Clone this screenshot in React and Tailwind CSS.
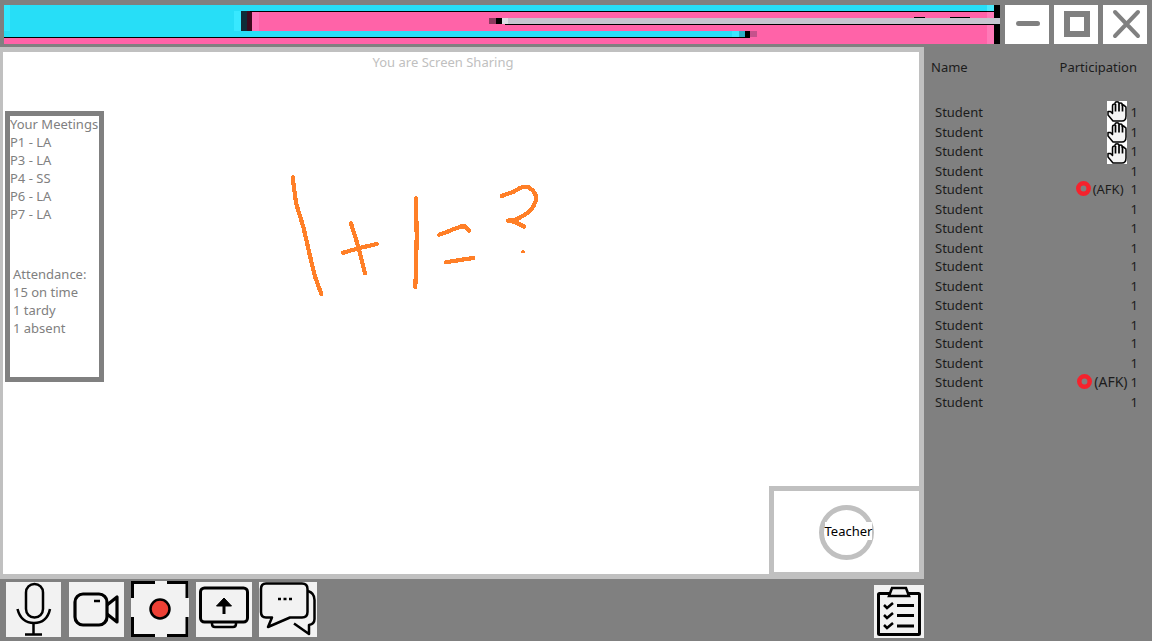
const rowHeights = ['h-[20px]', 'h-[19px]', 'h-[20px]', 'h-[18px]'];

const students = [
  { hand: '-mt-[2px]' },
  { hand: '-mt-[1px]' },
  { hand: 'mt-[1px]' },
  {},
  { afk: 'first' },
  {},
  {},
  {},
  {},
  {},
  {},
  {},
  {},
  {},
  { afk: 'second' },
  {},
];

const meetings = ['P1 - LA', 'P3 - LA', 'P4 - SS', 'P6 - LA', 'P7 - LA'];
const attendance = ['Attendance:', '15 on time', '1 tardy', '1 absent'];

// the broken title bar texture, page coordinates
function GlitchBar() {
  return (
    <svg width="996" height="39" viewBox="4 5 996 39" shapeRendering="crispEdges" className="block shrink-0">
      <rect x="4" y="5" width="996" height="39" fill="#ff63a8" />
      <rect x="4" y="5" width="990" height="6" fill="#27def7" />
      <rect x="987" y="5" width="7" height="6" fill="#4be9fb" />
      <rect x="4" y="11" width="250" height="20" fill="#27def7" />
      <rect x="4" y="5" width="6" height="32" fill="#33e8ff" />
      <rect x="234" y="11" width="7" height="20" fill="#38e8ff" />
      <rect x="241" y="11" width="6" height="20" fill="#0f2c38" />
      <rect x="247" y="11" width="5" height="20" fill="#3b0a1e" />
      <rect x="252" y="11" width="7" height="20" fill="#ff74b8" />
      <rect x="987" y="12" width="7" height="32" fill="#ff7ab8" />
      <rect x="250" y="11" width="744" height="1" fill="#000000" />
      <rect x="489" y="18" width="7" height="6" fill="#8c3a5f" />
      <rect x="496" y="18" width="6" height="6" fill="#000000" />
      <rect x="502" y="18" width="6" height="6" fill="#dfdfe8" />
      <rect x="508" y="18" width="492" height="6" fill="#c6c6d0" />
      <rect x="505" y="24" width="489" height="1" fill="#000000" />
      <rect x="914" y="17" width="11" height="1" fill="#000000" />
      <rect x="950" y="17" width="20" height="1" fill="#000000" />
      <rect x="4" y="31" width="728" height="6" fill="#27def7" />
      <rect x="732" y="31" width="7" height="6" fill="#3be6ff" />
      <rect x="739" y="31" width="6" height="6" fill="#2cb0c8" />
      <rect x="745" y="31" width="5" height="7" fill="#000000" />
      <rect x="750" y="31" width="7" height="6" fill="#c5528c" />
      <rect x="4" y="37" width="741" height="1" fill="#000000" />
      <rect x="994" y="5" width="6" height="13" fill="#000000" />
      <rect x="994" y="24" width="6" height="20" fill="#000000" />
    </svg>
  );
}

function WindowButton({ children }) {
  return (
    <div className="w-[44px] h-[39px] bg-white flex items-center justify-center">
      <svg width="44" height="39" viewBox="0 0 44 39" fill="none" stroke="#808080" strokeWidth="5">
        {children}
      </svg>
    </div>
  );
}

function Whiteboard() {
  const strokes = [
    '292.7,177.3 296,203 303.3,226.7 309.3,253 315,276.7 321.3,294',
    '351,223.3 358.3,246.7 365,273.3',
    '343.3,252.7 358.3,248.3 376.7,244',
    '416,198.3 416.7,236.7 416,270 415.3,287.3',
    '439.3,234.7 447,232 454,229 461,226.5 465,226.5 469.3,230.7',
    '445.7,262.3 460,260 473.3,258',
    '501.7,196 507,194 513,192 519,188.500 524,186.7 529,187.500 533,190.500 535.500,195 536,200 534,205 531,210 526,214 520,217.500 515,220 508,220.500 515,222 524.3,226.7',
  ];
  return (
    <svg className="absolute left-0 top-0" width="916" height="522" viewBox="3 52 916 522" fill="none" stroke="#ff7f27" strokeWidth="4.200" strokeLinecap="round" strokeLinejoin="round" shapeRendering="crispEdges">
      {strokes.map((s) => (
        <polyline key={s} points={s} />
      ))}
      <circle cx="523" cy="251.7" r="1.800" fill="#ff7f27" stroke="none" />
    </svg>
  );
}

function Hand({ className }) {
  return (
    <svg width="20" height="21" viewBox="0 0 20 21" className={`block shrink-0 bg-white ${className}`} fill="#f4f4f4" stroke="#000000" strokeWidth="1.500" strokeLinejoin="round">
      <path d="M6 20 L1 14 L1 10.500 L3.500 10.500 L5.500 12.500 V5 Q5.500 3 7.500 3 L8 3 V2 Q8 .8 10 .8 Q12 .8 12 2 V2.500 Q14 1.500 15 2.500 V4 Q17 3.500 17.500 5 Q19 5 19 7 V15 Q19 20 15 20 Z" />
      <path d="M8.500 3 V10.500 M12 2.500 V10.500 M15.500 4 V10.500" fill="none" strokeWidth="1.700" />
    </svg>
  );
}

function AfkRing() {
  return (
    <svg width="15" height="15" viewBox="0 0 15 15" fill="none" className="block shrink-0 mt-[1px]">
      <circle cx="7.500" cy="7.500" r="5.200" stroke="#f5222d" strokeWidth="4.600" />
    </svg>
  );
}

function StudentRow({ student, index }) {
  return (
    <div className={`${rowHeights[index % 4]} flex items-start leading-[18px] pl-[11px] pr-[14px] text-[13px] text-[#1c1c1c]`}>
      <span className="flex-1">Student</span>
      {student.hand && <Hand className={student.hand} />}
      {student.afk === 'first' && (
        <>
          <AfkRing />
          <span className="ml-[2px] mr-[7px]">(AFK)</span>
        </>
      )}
      {student.afk === 'second' && (
        <>
          <AfkRing />
          <span className="ml-[2px] mr-[3px] text-[14px]">(AFK)</span>
        </>
      )}
      <span className={student.hand ? 'ml-[4px]' : ''}>1</span>
    </div>
  );
}

function Tile({ className, viewBox, children }) {
  return (
    <svg className={`block shrink-0 bg-[#f2f2f2] ${className}`} viewBox={viewBox} fill="none" stroke="#000000" strokeWidth="3">
      {children}
    </svg>
  );
}

export default function App() {
  return (
    <div className="w-[1152px] h-[641px] bg-[#808080] overflow-hidden font-['Noto_Sans',sans-serif]">
      <div className="h-[47px] pt-[5px] pl-[4px] flex">
        <GlitchBar />
        <div className="ml-[5px] flex gap-[5px]">
          <WindowButton>
            <path d="M13.500 18.500 H32.500" strokeLinecap="round" strokeWidth="5" />
          </WindowButton>
          <WindowButton>
            <rect x="13" y="9" width="20" height="20" strokeWidth="6" />
          </WindowButton>
          <WindowButton>
            <path d="M12 7 L35 31 M35 7 L12 31" strokeLinecap="round" strokeWidth="4" />
          </WindowButton>
        </div>
      </div>

      <div className="flex h-[532px]">
        <div className="w-[924px] h-[532px] shrink-0 border-l-[3px] border-r-[5px] border-t-[5px] border-b-[5px] border-[#c0c0c0] bg-white relative">
          <p className="text-center text-[13px] leading-[18px] pr-[36px] text-[#c0c0c0] h-[59px] pt-[1px]">You are Screen Sharing</p>
          <div className="ml-[2px] w-[99px] h-[271px] border-[5px] border-[#808080] text-[13px] leading-[18px] text-[#808080]">
            <div className="-mt-[1px]">Your Meetings</div>
            {meetings.map((m) => (
              <div key={m}>{m}</div>
            ))}
            <div className="mt-[42px] pl-[3px]">
              {attendance.map((a) => (
                <div key={a}>{a}</div>
              ))}
            </div>
          </div>
          <Whiteboard />
          <div className="absolute right-0 bottom-0 w-[150px] h-[88px] bg-[#c0c0c0] pl-[5px] pt-[5px] pb-[2px]">
            <div className="w-[145px] h-[81px] bg-white flex items-center justify-center">
              <div className="mt-[1px] w-[55px] h-[55px] rounded-full border-[5px] border-[#c0c0c0] flex items-center justify-center">
                <span className="ml-[4px] -mt-[2px] bg-white text-black text-[13px] leading-[18px] shrink-0">Teacher</span>
              </div>
            </div>
          </div>
        </div>

        <div className="flex-1 text-[13px] text-[#1c1c1c]">
          <div className="flex justify-between pl-[7px] pr-[15px] pt-[11px] h-[56px] leading-[18px]">
            <span>Name</span>
            <span>Participation</span>
          </div>
          {students.map((s, i) => (
            <StudentRow key={i} student={s} index={i} />
          ))}
        </div>
      </div>

      <div className="flex pt-[2px] pl-[6px]">
        <Tile className="w-[55px] h-[55px] mt-[1px]" viewBox="6 582 55 55">
          <rect x="26" y="584" width="17" height="33.500" rx="8.500" strokeWidth="2.500" />
          <path d="M17.500 609 Q21 623 34 623 Q47 623 50 609" strokeWidth="2.500" />
          <path d="M33.500 623 V634 M25 634.500 H42" strokeWidth="2.500" />
        </Tile>
        <Tile className="w-[55px] h-[55px] mt-[1px] ml-[8px]" viewBox="69 582 55 55">
          <rect x="75" y="594" width="32" height="31" rx="8" strokeWidth="3.200" />
          <path d="M94 601 H100" strokeWidth="2.500" />
          <path d="M107 605 L117 597 V622 L107 614" strokeLinejoin="round" strokeWidth="3.200" />
        </Tile>
        <Tile className="w-[58px] h-[56px] ml-[7px]" viewBox="131 581 58 56">
          <path d="M132.500 598 V582.500 H155 M167 582.500 H187 V598 M132.500 617 V635.500 H155 M167 635.500 H187 V617" />
          <circle cx="160" cy="609" r="9.500" fill="#ee4035" strokeWidth="2.500" />
        </Tile>
        <Tile className="w-[56px] h-[55px] mt-[1px] ml-[7px]" viewBox="196 582 56 55">
          <rect x="200.500" y="588" width="47" height="34" rx="4" />
          <path d="M212 622 V624 Q212 627 215 627 H233 Q236 627 236 624 V622" strokeWidth="2.500" />
          <path d="M224 614 V600" />
          <path d="M216.500 606 L224 598 L231.500 606 Z" fill="#000000" strokeWidth="1" />
        </Tile>
        <Tile className="w-[58px] h-[55px] mt-[1px] ml-[7px]" viewBox="259 582 58 55">
          <path d="M266 583.500 H302 Q307.500 583.500 307.500 589 V612 Q307.500 617.500 302 617.500 H290 L268 627 L272 617.500 H266 Q261 617.500 261 612 V589 Q261 583.500 266 583.500 Z" strokeWidth="2.500" strokeLinejoin="round" />
          <path d="M308 591 Q314.500 593 314.500 600 V619 Q314.500 624 309 625 V634 L294 623.500" strokeWidth="2.500" strokeLinejoin="round" />
          <path d="M278 599 H292" strokeDasharray="3 2.500" strokeWidth="2.500" />
        </Tile>
        <div className="flex-1" />
        <Tile className="w-[50px] h-[53px] mr-[228px] mt-[4px]" viewBox="874 585 50 53">
          <rect x="878.500" y="593.500" width="41" height="41" rx="1" />
          <path d="M889 596 L892 588 H906 L909 596 Z" fill="#f2f2f2" strokeWidth="2.500" />
          <path d="M884 605 L887 608 L893 603 M884 615 L887 618 L893 613 M884 625 L887 628 L893 623" strokeWidth="2.500" />
          <path d="M897 605.500 H914 M897 615.500 H914 M897 626 H914" />
        </Tile>
      </div>
    </div>
  );
}
